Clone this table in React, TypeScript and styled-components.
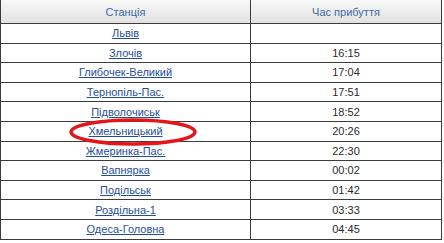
import styled, { createGlobalStyle } from "styled-components";

const GlobalStyle = createGlobalStyle`
    html, body {
        margin: 0;
        padding: 0;
        background: #ffffff;
        font-family: "Liberation Sans", Arial, sans-serif;
    }
`;

const Wrapper = styled.div`
    position: relative;
    width: 444px;
    height: 243px;
    overflow: hidden;
    background: #ffffff;
`;

const Table = styled.table`
    width: 442px;
    border-collapse: collapse;
    font-size: 11px;
    table-layout: fixed;
`;

const HeadCell = styled.th`
    height: 23px;
    padding: 0;
    font-weight: normal;
    color: #3a6aa6;
    text-align: center;
    background: linear-gradient(#f8f8f8, #e2e2e2);
    border: 1px solid #3c3c3c;
    border-top: none;
`;

const Cell = styled.td`
    height: 18.6px;
    padding: 0;
    text-align: center;
    color: #2b2b2b;
    border: 1px solid #3c3c3c;
`;

const StationLink = styled.a`
    color: #1f4f9c;
    text-decoration: underline;
`;

// red hand-drawn ring around the highlighted station
const Ellipse = styled.svg`
    position: absolute;
    left: 67px;
    top: 117px;
    pointer-events: none;
`;

const stops: [string, string][] = [
    ["Львів", ""],
    ["Злочів", "16:15"],
    ["Глибочек-Великий", "17:04"],
    ["Тернопіль-Пас.", "17:51"],
    ["Підволочиськ", "18:52"],
    ["Хмельницький", "20:26"],
    ["Жмеринка-Пас.", "22:30"],
    ["Вапнярка", "00:02"],
    ["Подільськ", "01:42"],
    ["Роздільна-1", "03:33"],
    ["Одеса-Головна", "04:45"],
];

export default function App() {
    return (
        <Wrapper>
            <GlobalStyle />
            <Table>
                <colgroup>
                    <col style={{ width: 250 }} />
                    <col />
                </colgroup>
                <thead>
                    <tr>
                        <HeadCell>Станція</HeadCell>
                        <HeadCell>Час прибуття</HeadCell>
                    </tr>
                </thead>
                <tbody>
                    {stops.map(([name, time]) => (
                        <tr key={name}>
                            <Cell>
                                <StationLink href="#">{name}</StationLink>
                            </Cell>
                            <Cell>{time}</Cell>
                        </tr>
                    ))}
                </tbody>
            </Table>
            <Ellipse width="134" height="30" viewBox="0 0 134 30">
                <ellipse cx="66" cy="15" rx="62" ry="12" fill="none" stroke="#e3161b" strokeWidth="3.4" />
            </Ellipse>
        </Wrapper>
    );
}
